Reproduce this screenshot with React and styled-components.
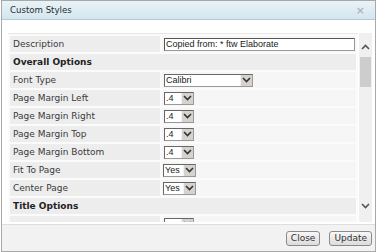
import styled, { createGlobalStyle } from 'styled-components';

const GlobalStyle = createGlobalStyle`
  body {
    margin: 0;
    background: #ffffff;
    font-family: "DejaVu Sans", Verdana, sans-serif;
  }
`;

const rows = [
  { kind: 'input', label: 'Description', value: 'Copied from: * ftw Elaborate' },
  { kind: 'header', label: 'Overall Options' },
  { kind: 'select', label: 'Font Type', value: 'Calibri', width: 87 },
  { kind: 'select', label: 'Page Margin Left', value: '.4', width: 28 },
  { kind: 'select', label: 'Page Margin Right', value: '.4', width: 28 },
  { kind: 'select', label: 'Page Margin Top', value: '.4', width: 28 },
  { kind: 'select', label: 'Page Margin Bottom', value: '.4', width: 28 },
  { kind: 'select', label: 'Fit To Page', value: 'Yes', width: 31, wide: true },
  { kind: 'select', label: 'Center Page', value: 'Yes', width: 31, wide: true },
  { kind: 'header', label: 'Title Options' },
  { kind: 'select', label: '', value: '', width: 28 },
];

const Chevron = ({ up, color = '#444' }) => (
  <svg width="9" height="6" viewBox="0 0 9 6">
    <path
      d={up ? 'M1 5 L4.5 1.5 L8 5' : 'M1 1 L4.5 4.5 L8 1'}
      fill="none"
      stroke={color}
      strokeWidth="1.6"
    />
  </svg>
);

const App = () => {
  return (
    <>
      <GlobalStyle />
      <Dialog>
        <TitleBar>
          <Title>Custom Styles</Title>
          <CloseX>×</CloseX>
        </TitleBar>
        <Body>
          <Panel>
            {rows.map((row, i) =>
              row.kind === 'header' ? (
                <HeaderCell key={i}>{row.label}</HeaderCell>
              ) : (
                <Row key={i}>
                  <LabelCell>{row.label}</LabelCell>
                  <ValueCell>
                    {row.kind === 'input' ? (
                      <TextInput>{row.value}</TextInput>
                    ) : (
                      <Select style={{ width: row.width }} $wide={row.wide}>
                        <SelectText>{row.value}</SelectText>
                        <SelectArrow>
                          <Chevron color="#333" />
                        </SelectArrow>
                      </Select>
                    )}
                  </ValueCell>
                </Row>
              )
            )}
          </Panel>
          <Scrollbar>
            <ScrollArrow $h={24} $pad="4px 0 0 0">
              <Chevron up color="#555" />
            </ScrollArrow>
            <Track>
              <Thumb />
            </Track>
            <ScrollArrow $h={32} $pad="0">
              <Chevron color="#555" />
            </ScrollArrow>
          </Scrollbar>
        </Body>
        <Footer>
          <Button>Close</Button>
          <Button>Update</Button>
        </Footer>
      </Dialog>
    </>
  );
};

export default App;

const Dialog = styled.div`
  width: 373px;
  height: 250px;
  margin-left: 1px;
  border: 1px solid #a9a9a9;
  display: flex;
  flex-direction: column;
  background: #ffffff;
`;

const TitleBar = styled.div`
  height: 18px;
  padding: 0 8px 0 8px;
  display: flex;
  align-items: center;
  justify-content: space-between;
  background: linear-gradient(#e9f3f8, #d3e6ef);
  border-bottom: 1px solid #b3c9d4;
`;

const Title = styled.div`
  font-size: 8.6px;
  color: #2b2b2b;
`;

const CloseX = styled.div`
  font-size: 11px;
  color: #a8a8a8;
  margin-right: 2px;
`;

const Body = styled.div`
  flex: 1;
  display: flex;
  padding: 13px 3px 2px 6px;
  min-height: 0;
`;

const Panel = styled.div`
  flex: 1;
  overflow: hidden;
  display: flex;
  flex-direction: column;
  gap: 2px;
  padding: 2px 2px 0 2px;
  background: #fbfbfb;
  border-top: 1px solid #e6e6e6;
`;

const Row = styled.div`
  display: grid;
  grid-template-columns: 150px 1fr;
  gap: 2px;
  flex: 0 0 16px;
`;

const LabelCell = styled.div`
  background: #ededed;
  font-size: 9px;
  color: #3a3a3a;
  display: flex;
  align-items: center;
  padding-left: 3px;
`;

const HeaderCell = styled(LabelCell)`
  flex: 0 0 16px;
  font-weight: bold;
  color: #222;
`;

const ValueCell = styled.div`
  background: #f6f6f6;
  display: flex;
  align-items: center;
  padding-left: 2px;
`;

const TextInput = styled.div`
  width: 188px;
  height: 11px;
  border: 1px solid;
  border-color: #555 #999 #999 #555;
  background: #fff;
  font-family: "Liberation Sans", Arial, sans-serif;
  font-size: 9px;
  line-height: 11px;
  padding-left: 1px;
  color: #222;
  overflow: hidden;
  white-space: nowrap;
`;

const Select = styled.div`
  height: 11px;
  border: 1px solid;
  border-color: #666 #999 #999 #666;
  background: #fff;
  display: flex;
  box-sizing: content-box;
  margin-left: ${(p) => (p.$wide ? '-1px' : '0')};
`;

const SelectText = styled.div`
  flex: 1;
  font-family: "Liberation Sans", Arial, sans-serif;
  font-size: 9px;
  line-height: 11px;
  padding-left: 1px;
  color: #222;
  overflow: hidden;
  white-space: nowrap;
`;

const SelectArrow = styled.div`
  width: 11px;
  background: #d6d3ce;
  border-left: 1px solid #f2f2f2;
  display: flex;
  align-items: center;
  justify-content: center;
`;

const Scrollbar = styled.div`
  width: 13px;
  margin-left: 1px;
  background: #f0f0f0;
  display: flex;
  flex-direction: column;
`;

const ScrollArrow = styled.div`
  height: ${(p) => p.$h}px;
  padding: ${(p) => p.$pad};
  box-sizing: border-box;
  display: flex;
  align-items: center;
  justify-content: center;
`;

const Track = styled.div`
  flex: 1;
  padding: 0 1px;
`;

const Thumb = styled.div`
  height: 30px;
  background: #cdcdcd;
`;

const Footer = styled.div`
  height: 26px;
  border-top: 1px solid #dedede;
  background: #f2f2f2;
  display: flex;
  justify-content: flex-end;
  align-items: center;
  gap: 9px;
  padding-right: 3px;
`;

const Button = styled.div`
  height: 13px;
  padding: 0 4px;
  border: 1px solid #8a8a8a;
  border-radius: 3px;
  background: linear-gradient(#f7f7f7, #dcdcdc);
  font-size: 9px;
  line-height: 13px;
  color: #333;
`;
